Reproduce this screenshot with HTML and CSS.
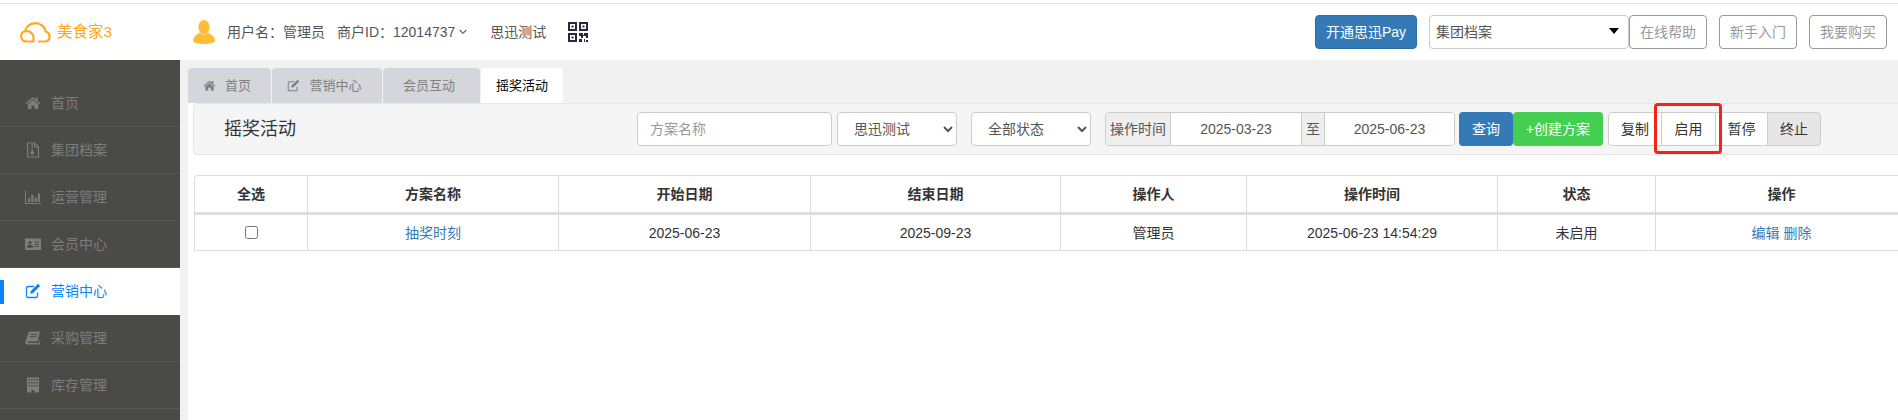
FILE: index.html
```html
<!DOCTYPE html>
<html lang="zh-CN">
<head>
<meta charset="utf-8">
<title>摇奖活动</title>
<link rel="stylesheet" href="styles.css">
</head>
<body>
<svg class="defs" width="0" height="0" aria-hidden="true">
  <symbol id="i-home" viewBox="0 0 16 16"><path fill="currentColor" d="M8 2 .6 8.2l.9 1L8 3.900l6.500 5.300.9-1-2.700-2.200V2.500h-2v1.700zM8 5 2.800 9.300V14h3.700v-3.200h3V14h3.700V9.300z"/></symbol>
  <symbol id="i-edit" viewBox="0 0 16 16"><path fill="none" stroke="currentColor" stroke-width="1.300" d="M12.500 9.500V13a1.500 1.500 0 0 1-1.500 1.500H3A1.500 1.500 0 0 1 1.500 13V5A1.500 1.500 0 0 1 3 3.500h6"/><path fill="currentColor" d="m13 .8 2.200 2.200-7.200 7.200-2.800.6.600-2.800z"/></symbol>
  <symbol id="i-file" viewBox="0 0 16 16"><path fill="none" stroke="currentColor" stroke-width="1.200" d="M2.600 1h7l3.800 3.800V15H2.600zM9.500 1v4h3.900"/><path fill="currentColor" d="M6.500 2h1.600v1.500H6.500zm0 2.500h1.600V6H6.500zm0 2.500h1.600v2.200a1.800 1.800 0 1 1-1.600 0z"/></symbol>
  <symbol id="i-chart" viewBox="0 0 16 16"><path fill="currentColor" d="M0 1.500h1V14h15v1H0zM3 9h2.200v4H3zm3.300-3h2.200v7H6.300zm3.300 2.500h2.200V13H9.600zM12.900 4.500H15V13h-2.100z"/></symbol>
  <symbol id="i-card" viewBox="0 0 16 16"><path fill="currentColor" fill-rule="evenodd" d="M0 2.500h16V14H0zM5 5a1.600 1.600 0 1 0 0 3.200A1.600 1.600 0 0 0 5 5zM2 11.800h6V10.500c0-1-1-1.700-3-1.700s-3 .7-3 1.700zM9.500 5.500v1H14v-1zm0 2.300v1H14v-1zm0 2.300v1H14v-1z"/></symbol>
  <symbol id="i-book" viewBox="0 0 16 16"><path fill="currentColor" d="M4 1.500h11L12.500 11.500h-9c-1 0-1.200 1.500 0 1.500h10.300l1-4 .7.700-1 4.800H3C.6 15 0 13 .4 11.500zM5.500 4v1h6.300l.3-1zm-.6 2.300v1h6.300l.3-1z"/></symbol>
  <symbol id="i-building" viewBox="0 0 16 16"><path fill="currentColor" fill-rule="evenodd" d="M2 .5h12v15H9.500v-2.500h-3v2.500H2zM3.500 2v1.500H5V2zm2.500 0v1.500h1.500V2zm2.500 0v1.500H10V2zM11 2v1.500h1.500V2zM3.500 5v1.500H5V5zM6 5v1.500h1.500V5zm2.500 0v1.500H10V5zM11 5v1.500h1.500V5zM3.500 8v1.500H5V8zM6 8v1.500h1.500V8zm2.500 0v1.500H10V8zM11 8v1.500h1.500V8z"/></symbol>
</svg>

<div class="topline"></div>
<header class="header">
  <div class="logo">
    <svg class="logo-cloud" viewBox="0 0 32 21"><path fill="none" stroke="currentColor" stroke-width="2.200" stroke-linecap="round" stroke-linejoin="round" d="M13.500 14.500V19.500H6.200A5.200 5.200 0 0 1 5 9.300C6 4.500 10.500 1.200 15.500 1.200c5.500 0 9.500 3.600 10 8.300A5.200 5.200 0 0 1 26 19.500H19M5 9.300c3.500-.8 7 .8 8.500 5.200"/></svg>
    <span class="logo-text">美食家3</span>
  </div>
  <svg class="avatar" viewBox="0 0 22 24"><ellipse cx="11" cy="7" rx="5.600" ry="7" fill="currentColor"/><path fill="currentColor" d="M7 12.500C3 14.500 0 17.500 0 20.500 0 22.500 4 24 11 24s11-1.500 11-3.500c0-3-3-6-7-8-2.500 2.500-5.500 2.500-8 0z"/></svg>
  <span class="user">用户名：管理员</span>
  <span class="merchant">商户ID：12014737</span>
  <svg class="chev" viewBox="0 0 8 6"><path fill="none" stroke="currentColor" stroke-width="1.100" d="m.7 1 3.300 3.300L7.300 1"/></svg>
  <span class="shop">思迅测试</span>
  <svg class="qr" viewBox="0 0 20 20">
    <path fill="currentColor" fill-rule="evenodd" d="M0 0h9v9H0zm2 2v5h5V2zM11 0h9v9h-9zm2 2v5h5V2zM0 11h9v9H0zm2 2v5h5v-5zM3.500 3.500h2v2h-2zm11 0h2v2h-2zm-11 11h2v2h-2zM11 11h4v2h1v-2h4v5h-2v-2h-3v2h-2v-2h-2zm0 6h3v3h-3zm5 0h1v3h-1zm2 1h2v2h-2z"/>
  </svg>
  <div class="header-right">
    <a class="btn-pay">开通思迅Pay</a>
    <div class="group-select"><select class="group-native"><option>集团档案</option></select></div>
    <a class="btn-ghost">在线帮助</a>
    <a class="btn-ghost gap">新手入门</a>
    <a class="btn-ghost gap">我要购买</a>
  </div>
</header>

<div class="main">
  <nav class="sidebar">
    <a class="nav-item"><svg class="nav-ico"><use href="#i-home"/></svg>首页</a>
    <a class="nav-item"><svg class="nav-ico"><use href="#i-file"/></svg>集团档案</a>
    <a class="nav-item"><svg class="nav-ico"><use href="#i-chart"/></svg>运营管理</a>
    <a class="nav-item"><svg class="nav-ico"><use href="#i-card"/></svg>会员中心</a>
    <a class="nav-item active"><svg class="nav-ico"><use href="#i-edit"/></svg>营销中心</a>
    <a class="nav-item"><svg class="nav-ico"><use href="#i-book"/></svg>采购管理</a>
    <a class="nav-item"><svg class="nav-ico"><use href="#i-building"/></svg>库存管理</a>
    <a class="nav-item"></a>
  </nav>

  <section class="content">
    <div class="tabs">
      <a class="tab t1"><svg class="tab-ico"><use href="#i-home"/></svg>首页</a>
      <a class="tab t2"><svg class="tab-ico"><use href="#i-edit"/></svg>营销中心</a>
      <a class="tab t3">会员互动</a>
      <a class="tab t4 current">摇奖活动</a>
    </div>
    <div class="page">
      <div class="toolbar">
        <h1 class="title">摇奖活动</h1>
        <input class="ctl name" type="text" placeholder="方案名称">
        <select class="ctl sel s1"><option>思迅测试</option></select>
        <select class="ctl sel s2"><option>全部状态</option></select>
        <div class="dates">
          <span class="addon a-time">操作时间</span>
          <input class="date" type="text" value="2025-03-23">
          <span class="addon a-to">至</span>
          <input class="date" type="text" value="2025-06-23">
        </div>
        <a class="btn query">查询</a>
        <a class="btn create">+创建方案</a>
        <div class="btn-group">
          <a class="act a1">复制</a>
          <a class="act a2">启用</a>
          <a class="act a3">暂停</a>
          <a class="act a4">终止</a>
          <span class="mark"></span>
        </div>
      </div>
      <table class="grid">
        <colgroup>
          <col class="c1"><col class="c2"><col class="c3"><col class="c4"><col class="c5"><col class="c6"><col class="c7"><col class="c8">
        </colgroup>
        <thead>
          <tr><th>全选</th><th>方案名称</th><th>开始日期</th><th>结束日期</th><th>操作人</th><th>操作时间</th><th>状态</th><th>操作</th></tr>
        </thead>
        <tbody>
          <tr>
            <td><input class="check" type="checkbox"></td>
            <td><a class="link">抽奖时刻</a></td>
            <td>2025-06-23</td>
            <td>2025-09-23</td>
            <td>管理员</td>
            <td>2025-06-23 14:54:29</td>
            <td>未启用</td>
            <td><a class="link">编辑</a> <a class="link">删除</a></td>
          </tr>
        </tbody>
      </table>
    </div>
  </section>
</div>
</body>
</html>
```

FILE: styles.css
```css
* { box-sizing: border-box; }
html, body { margin: 0; padding: 0; }
body {
  width: 1898px;
  height: 420px;
  overflow: hidden;
  background: #fff;
  color: #333;
  font: 14px/20px "Liberation Sans", "Noto Sans CJK SC", sans-serif;
}
.defs { display: block; height: 0; }
.topline { height: 4px; border-bottom: 1px solid #e2e2e2; }

.header { height: 56px; display: flex; align-items: center; color: #555; }
.logo { width: 193px; display: flex; align-items: center; color: #ffa724; padding-left: 20px; flex: none; }
.logo-cloud { width: 32px; height: 21px; flex: none; }
.logo-text { margin-left: 5px; font-size: 15.500px; }
.avatar { width: 22px; height: 24px; color: #ffbd35; flex: none; }
.user { margin-left: 12px; }
.merchant { margin-left: 12px; }
.chev { width: 8px; height: 6px; margin-left: 4px; color: #555; }
.shop { margin-left: 23px; }
.qr { width: 20px; height: 20px; margin-left: 22px; color: #27273d; flex: none; }
.header-right { margin-left: auto; padding-right: 11px; display: flex; align-items: center; }
.btn-pay {
  width: 102px; height: 34px; line-height: 32px; text-align: center;
  background: #337ab7; border: 1px solid #2e6da4; border-radius: 4px; color: #fff;
  margin-right: 12px;
}
.group-select { position: relative; width: 200px; height: 34px; }
.group-select::after {
  content: ""; position: absolute; right: 10px; top: 13px;
  border-left: 5px solid transparent; border-right: 5px solid transparent; border-top: 6px solid #000;
}
.group-native {
  width: 100%; height: 100%; appearance: none; background: #fff; color: #555;
  border: 1px solid #ccc; border-radius: 4px; padding: 0 6px; font: inherit;
}
.btn-ghost {
  width: 78px; height: 34px; line-height: 32px; text-align: center;
  border: 1px solid #999; border-radius: 4px; color: #999; background: #fff;
}
.btn-ghost.gap { margin-left: 12px; }

.main { display: flex; height: 360px; }
.sidebar { width: 180px; flex: none; background: #4a4b47; padding-top: 20px; overflow: hidden; }
.nav-item {
  position: relative; display: flex; align-items: center; height: 47px;
  padding-left: 25px; color: #7d7d7d; border-bottom: 1px solid #575854;
}
.nav-ico { width: 16px; height: 16px; margin-right: 10px; flex: none; }
.nav-item.active { background: #fff; color: #0a84ff; border-bottom-color: #fff; }
.nav-item.active::before {
  content: ""; position: absolute; left: 0; top: 12px; width: 4px; height: 24px; background: #0a84ff;
}

.content { flex: 1; min-width: 0; background: #f1f1f1; padding: 8px 0 0 8px; overflow: hidden; }
.tabs { display: flex; height: 35px; gap: 1px; font-size: 13px; }
.tab {
  display: flex; align-items: center; justify-content: center; height: 35px;
  background: #d5d6dc; color: #808080; border-radius: 4px 4px 0 0; flex: none;
  padding-right: 5px;
}
.tab.t1 { width: 83px; }
.tab.t2 { width: 110px; }
.tab.t3 { width: 97px; }
.tab.t4 { width: 82px; padding-right: 0; }
.tab.current { background: #fff; color: #000; }
.tab-ico { width: 13px; height: 13px; margin-right: 9px; flex: none; }

.page { background: #fff; height: 317px; padding-left: 5px; }
.toolbar {
  width: 1720px; height: 52px; display: flex; align-items: center;
  background: #f5f5f5; border: 1px solid #e7e7e7; border-radius: 4px;
}
.title { width: 443px; flex: none; margin: 0; padding-left: 30px; font-size: 18px; font-weight: 400; color: #333; }
.ctl {
  height: 34px; background: #fff; border: 1px solid #ccc; border-radius: 4px;
  font: inherit; color: #555; flex: none;
}
.name { width: 195px; padding: 0 12px; }
.name::placeholder { color: #999; }
.sel { width: 120px; padding: 0 12px; }
.s1 { margin-left: 5px; }
.s2 { margin-left: 14px; }
.dates { display: flex; height: 34px; margin-left: 14px; border: 1px solid #ccc; border-radius: 4px; flex: none; overflow: hidden; }
.addon { background: #eee; color: #555; display: flex; align-items: center; justify-content: center; flex: none; }
.a-time { width: 65px; border-right: 1px solid #ccc; white-space: nowrap; }
.a-to { width: 24px; border-left: 1px solid #ccc; border-right: 1px solid #ccc; }
.date { width: 130px; border: 0; background: #fff; text-align: center; font: inherit; color: #555; padding: 0; }
.date:last-child { width: 129px; }
.btn {
  height: 34px; line-height: 34px; text-align: center; color: #fff; flex: none; border-radius: 4px;
}
.query { width: 54px; margin-left: 4px; background: #337ab7; }
.create { width: 90px; background: #45cf52; }
.btn-group { position: relative; display: flex; margin-left: 5px; flex: none; }
.act {
  width: 55px; height: 34px; line-height: 32px; text-align: center; background: #fff;
  border: 1px solid #ccc; margin-left: -1px; color: #333;
}
.a1 { width: 54px; margin-left: 0; border-radius: 4px 0 0 4px; }
.a3 { width: 53px; border-right-color: #fff; border-left-color: #ccc; }
.a4 { width: 54px; background: #e6e6e6; border-radius: 0 4px 4px 0; }
.mark {
  position: absolute; left: 46px; top: -9px; width: 68px; height: 51px;
  border: 3px solid #f5211a; border-radius: 4px;
}

.grid {
  width: 1714px; margin: 20px 0 0 1px; table-layout: fixed;
  border-collapse: separate; border-spacing: 0;
  border-top: 1px solid #ddd; border-left: 1px solid #ddd; border-top-left-radius: 4px;
}
.c1 { width: 113px; }
.c2 { width: 251px; }
.c3 { width: 252px; }
.c4 { width: 250px; }
.c5 { width: 186px; }
.c6 { width: 251px; }
.c7 { width: 158px; }
.c8 { width: 252px; }
.grid th, .grid td { text-align: center; border-right: 1px solid #ddd; padding: 0; vertical-align: middle; }
.grid th { height: 39px; font-weight: 700; border-bottom: 3px solid #ddd; color: #333; }
.grid td { height: 36px; border-bottom: 1px solid #ddd; color: #333; }
.link { color: #337ab7; }
.check { width: 13px; height: 13px; margin: 0; vertical-align: -1px; }
```
